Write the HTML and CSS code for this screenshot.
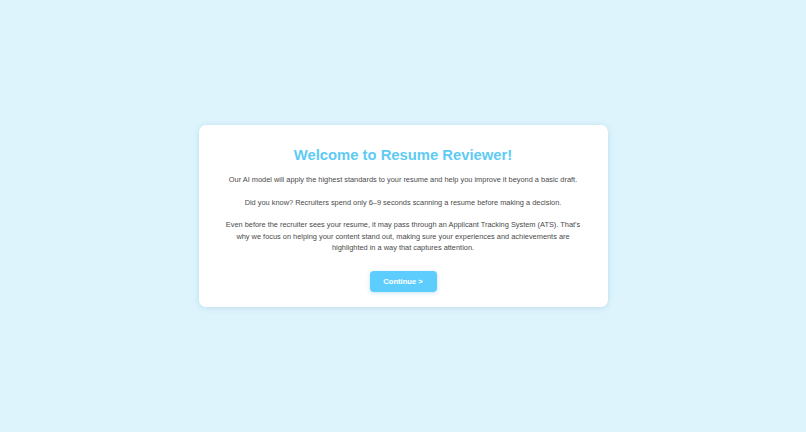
FILE: index.html
```html
<!DOCTYPE html>
<html lang="en">
<head>
<meta charset="utf-8">
<title>Resume Reviewer</title>
<link rel="stylesheet" href="styles.css">
</head>
<body>
<main class="page">
  <section class="card">
    <h1 class="title">Welcome to Resume Reviewer!</h1>
    <p class="text">Our AI model will apply the highest standards to your resume and help you improve it beyond a basic draft.</p>
    <p class="text">Did you know? Recruiters spend only 6–9 seconds scanning a resume before making a decision.</p>
    <p class="text">Even before the recruiter sees your resume, it may pass through an Applicant Tracking System (ATS). That's why we focus on helping your content stand out, making sure your experiences and achievements are highlighted in a way that captures attention.</p>
    <button class="btn" type="button">Continue &gt;</button>
  </section>
</main>
</body>
</html>
```
FILE: styles.css
```css
* { box-sizing: border-box; }
html, body { margin: 0; padding: 0; }
body {
  background: #ddf4fd;
  font-family: "Liberation Sans", Arial, sans-serif;
}
.page {
  min-height: 100vh;
  display: flex;
  align-items: center;
  justify-content: center;
}
.card {
  width: 409px;
  background: #ffffff;
  border-radius: 7px;
  box-shadow: 0 1px 6px rgba(60, 120, 150, 0.18);
  padding: 21px 27px 15px;
  display: flex;
  flex-direction: column;
  align-items: center;
  text-align: center;
}
.title {
  margin: 0 0 10px;
  font-size: 14.8px;
  line-height: 18px;
  font-weight: bold;
  color: #5ecbf4;
}
.text {
  margin: 0 0 11px;
  font-size: 7.4px;
  line-height: 11.5px;
  color: #4a4a4a;
}
.btn {
  margin-top: 6px;
  width: 67px;
  height: 21px;
  border: none;
  border-radius: 4px;
  background: #5ccdfc;
  color: #ffffff;
  font-family: "Liberation Sans", Arial, sans-serif;
  font-size: 7.6px;
  font-weight: bold;
  box-shadow: 0 1px 4px rgba(60, 160, 210, 0.3);
}
```
